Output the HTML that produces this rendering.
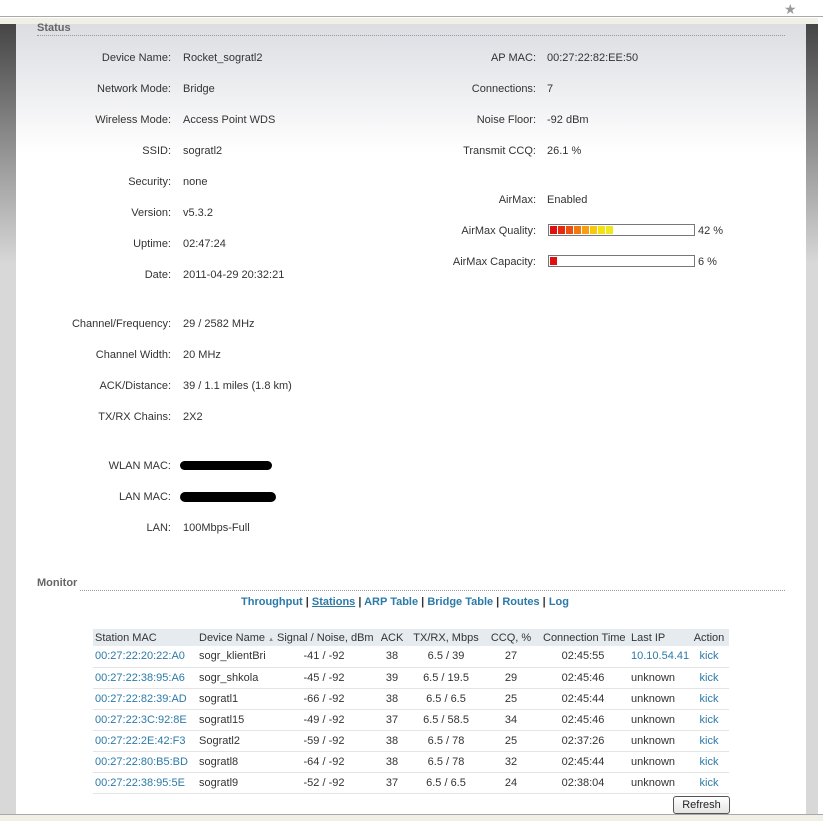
<!DOCTYPE html>
<html><head><meta charset="utf-8"><style>
*{margin:0;padding:0;box-sizing:border-box}
body{width:823px;height:821px;overflow:hidden;position:relative;background:#fff;font-family:"Liberation Sans",sans-serif;font-size:11px;color:#333}
.a{position:absolute;white-space:nowrap}
.lbl{position:absolute;text-align:right;white-space:nowrap}
.lnk{color:#2b7aa8}
#top{position:absolute;left:0;top:0;width:823px;height:17px;background:#fff;border-bottom:1px solid #a9a9a9}
#beige{position:absolute;left:0;top:18px;width:818px;height:6px;background:#f0f0e6}
#lside{position:absolute;left:0;top:24px;width:16px;height:790px;background:linear-gradient(#454545,#d8d8d8 240px,#d8d8d8)}
#rside{position:absolute;left:806px;top:24px;width:12px;height:790px;background:linear-gradient(#454545,#d8d8d8 240px,#d8d8d8)}
#content{position:absolute;left:16px;top:24px;width:790px;height:790px;background:linear-gradient(#dcdde2,#fff 130px,#fff)}
#bot{position:absolute;left:0;top:814px;width:823px;height:7px;background:#f0f0e6;border-top:1px solid #a9a9a9}
.sec{position:absolute;left:37px;font-weight:bold;color:#666;font-size:11px}
.dots{position:absolute;left:37px;width:748px;border-top:1px dotted #999}
.f{position:absolute;left:0;top:1px;width:823px;height:600px}
table{position:absolute;left:93px;top:629px;width:636px;border-collapse:collapse;table-layout:fixed}
td,th{height:21px;font-weight:normal;white-space:nowrap;border-bottom:1px solid #e4e4e4;padding:0 2px;overflow:hidden}
th{height:17px;background:#e6ebef;text-align:left;border:0}
.c{text-align:center}
.ip{padding-left:6px}
</style></head><body>
<div id="top"></div>
<div class="a" style="left:784px;top:1px;color:#999;font-size:14px">★</div>
<div id="beige"></div>
<div id="lside"></div><div id="rside"></div>
<div id="content"></div>
<div id="bot"></div>

<div class="sec" style="top:22px">Status</div>
<div class="dots" style="top:35px"></div>
<div class="f">
<div class="lbl" style="right:652px;top:51px">Device Name:</div><div class="a" style="left:183px;top:51px">Rocket_sogratl2</div>
<div class="lbl" style="right:652px;top:82px">Network Mode:</div><div class="a" style="left:183px;top:82px">Bridge</div>
<div class="lbl" style="right:652px;top:113px">Wireless Mode:</div><div class="a" style="left:183px;top:113px">Access Point WDS</div>
<div class="lbl" style="right:652px;top:144px">SSID:</div><div class="a" style="left:183px;top:144px">sogratl2</div>
<div class="lbl" style="right:652px;top:175px">Security:</div><div class="a" style="left:183px;top:175px">none</div>
<div class="lbl" style="right:652px;top:206px">Version:</div><div class="a" style="left:183px;top:206px">v5.3.2</div>
<div class="lbl" style="right:652px;top:237px">Uptime:</div><div class="a" style="left:183px;top:237px">02:47:24</div>
<div class="lbl" style="right:652px;top:268px">Date:</div><div class="a" style="left:183px;top:268px">2011-04-29 20:32:21</div>
<div class="lbl" style="right:652px;top:317px">Channel/Frequency:</div><div class="a" style="left:183px;top:317px">29 / 2582 MHz</div>
<div class="lbl" style="right:652px;top:348px">Channel Width:</div><div class="a" style="left:183px;top:348px">20 MHz</div>
<div class="lbl" style="right:652px;top:379px">ACK/Distance:</div><div class="a" style="left:183px;top:379px">39 / 1.1 miles (1.8 km)</div>
<div class="lbl" style="right:652px;top:410px">TX/RX Chains:</div><div class="a" style="left:183px;top:410px">2X2</div>
<div class="lbl" style="right:652px;top:459px">WLAN MAC:</div><div class="a" style="left:180px;top:460px;width:92px;height:9px;background:#000;border-radius:5px"></div>
<div class="lbl" style="right:652px;top:490px">LAN MAC:</div><div class="a" style="left:180px;top:491px;width:96px;height:10px;background:#000;border-radius:5px"></div>
<div class="lbl" style="right:652px;top:521px">LAN:</div><div class="a" style="left:183px;top:521px">100Mbps-Full</div>

<div class="lbl" style="right:287px;top:51px">AP MAC:</div><div class="a" style="left:547px;top:51px">00:27:22:82:EE:50</div>
<div class="lbl" style="right:287px;top:82px">Connections:</div><div class="a" style="left:547px;top:82px">7</div>
<div class="lbl" style="right:287px;top:113px">Noise Floor:</div><div class="a" style="left:547px;top:113px">-92 dBm</div>
<div class="lbl" style="right:287px;top:144px">Transmit CCQ:</div><div class="a" style="left:547px;top:144px">26.1 %</div>
<div class="lbl" style="right:287px;top:193px">AirMax:</div><div class="a" style="left:547px;top:193px">Enabled</div>
<div class="lbl" style="right:287px;top:224px">AirMax Quality:</div>
<div class="a" style="left:548px;top:223px;width:147px;height:12px;border:1px solid #777;background:#fff;padding:1px">
<div style="display:flex;gap:1px;height:8px">
<span style="width:7px;background:#e01010"></span><span style="width:7px;background:#e52a10"></span><span style="width:7px;background:#ea5010"></span><span style="width:7px;background:#f07a10"></span><span style="width:7px;background:#f5a010"></span><span style="width:7px;background:#f8c810"></span><span style="width:7px;background:#f5e010"></span><span style="width:7px;background:#eee820"></span></div></div>
<div class="a" style="left:698px;top:224px">42 %</div>
<div class="lbl" style="right:287px;top:255px">AirMax Capacity:</div>
<div class="a" style="left:548px;top:254px;width:147px;height:12px;border:1px solid #777;background:#fff;padding:1px"><div style="width:7px;height:8px;background:#e01010"></div></div>
<div class="a" style="left:698px;top:255px">6 %</div>
</div>

<div class="sec" style="top:577px">Monitor</div>
<div class="dots" style="top:590px;left:80px;width:705px"></div>
<div class="a" style="left:241px;top:596px;font-weight:bold;color:#333"><span class="lnk">Throughput</span> | <span class="lnk" style="text-decoration:underline">Stations</span> | <span class="lnk">ARP Table</span> | <span class="lnk">Bridge Table</span> | <span class="lnk">Routes</span> | <span class="lnk">Log</span></div>

<table>
<colgroup><col style="width:104px"><col style="width:78px"><col style="width:98px"><col style="width:38px"><col style="width:70px"><col style="width:60px"><col style="width:84px"><col style="width:64px"><col style="width:40px"></colgroup>
<tr><th>Station MAC</th><th>Device Name <span style="font-size:6px;color:#888">▲</span></th><th class="c">Signal / Noise, dBm</th><th class="c">ACK</th><th class="c">TX/RX, Mbps</th><th class="c">CCQ, %</th><th class="c">Connection Time</th><th class="ip">Last IP</th><th class="c">Action</th></tr>
<tr><td class="lnk">00:27:22:20:22:A0</td><td>sogr_klientBri</td><td class="c">-41 / -92</td><td class="c">38</td><td class="c">6.5 / 39</td><td class="c">27</td><td class="c">02:45:55</td><td class="lnk ip">10.10.54.41</td><td class="c lnk">kick</td></tr>
<tr><td class="lnk">00:27:22:38:95:A6</td><td>sogr_shkola</td><td class="c">-45 / -92</td><td class="c">39</td><td class="c">6.5 / 19.5</td><td class="c">29</td><td class="c">02:45:46</td><td class="ip">unknown</td><td class="c lnk">kick</td></tr>
<tr><td class="lnk">00:27:22:82:39:AD</td><td>sogratl1</td><td class="c">-66 / -92</td><td class="c">38</td><td class="c">6.5 / 6.5</td><td class="c">25</td><td class="c">02:45:44</td><td class="ip">unknown</td><td class="c lnk">kick</td></tr>
<tr><td class="lnk">00:27:22:3C:92:8E</td><td>sogratl15</td><td class="c">-49 / -92</td><td class="c">37</td><td class="c">6.5 / 58.5</td><td class="c">34</td><td class="c">02:45:46</td><td class="ip">unknown</td><td class="c lnk">kick</td></tr>
<tr><td class="lnk">00:27:22:2E:42:F3</td><td>Sogratl2</td><td class="c">-59 / -92</td><td class="c">38</td><td class="c">6.5 / 78</td><td class="c">25</td><td class="c">02:37:26</td><td class="ip">unknown</td><td class="c lnk">kick</td></tr>
<tr><td class="lnk">00:27:22:80:B5:BD</td><td>sogratl8</td><td class="c">-64 / -92</td><td class="c">38</td><td class="c">6.5 / 78</td><td class="c">32</td><td class="c">02:45:44</td><td class="ip">unknown</td><td class="c lnk">kick</td></tr>
<tr><td class="lnk">00:27:22:38:95:5E</td><td>sogratl9</td><td class="c">-52 / -92</td><td class="c">37</td><td class="c">6.5 / 6.5</td><td class="c">24</td><td class="c">02:38:04</td><td class="ip">unknown</td><td class="c lnk">kick</td></tr>
</table>
<div class="a" style="left:673px;top:796px;width:57px;height:18px;border:1px solid #555;border-radius:3px;background:linear-gradient(#fff,#e4e4e4);text-align:center;line-height:16px;color:#222">Refresh</div>
</body></html>
